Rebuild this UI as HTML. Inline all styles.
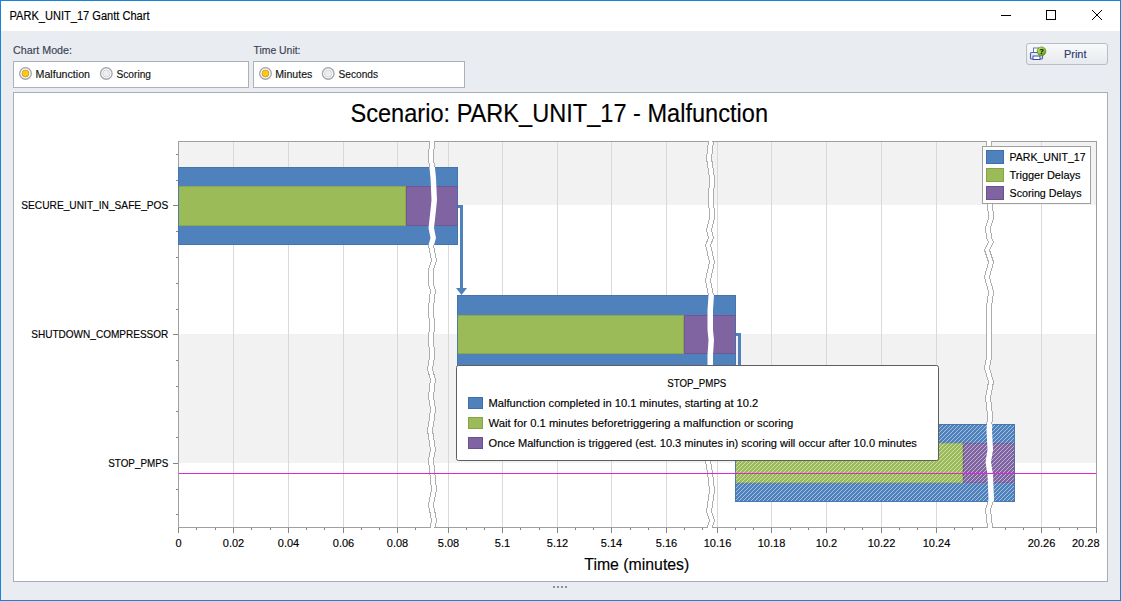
<!DOCTYPE html><html><head><meta charset="utf-8"><title>PARK_UNIT_17 Gantt Chart</title>
<style>html,body{margin:0;padding:0;width:1121px;height:601px;overflow:hidden;background:#e9ecf0}svg{display:block;font-family:"Liberation Sans", sans-serif}text{stroke:currentColor;stroke-width:0.15px}</style></head><body>
<svg width="1121" height="601" viewBox="0 0 1121 601" shape-rendering="crispEdges">
<defs>
<pattern id="hatch" patternUnits="userSpaceOnUse" width="4" height="4"><path d="M-1,1 L1,-1 M0,4 L4,0 M3,5 L5,3" stroke="#ffffff" stroke-opacity="0.5" stroke-width="1" shape-rendering="auto"/></pattern>
<filter id="tipsh" x="-5%" y="-5%" width="110%" height="120%"><feDropShadow dx="1" dy="1" stdDeviation="1" flood-color="#000" flood-opacity="0.15"/></filter>
</defs>
<rect x="0" y="0" width="1121" height="601" fill="#e9ecf0"/>
<rect x="1" y="1" width="1119" height="30" fill="#ffffff"/>
<rect x="0.5" y="0.5" width="1120" height="600" fill="none" stroke="#1883d7"/>
<text x="9.5" y="20" font-size="12" fill="#000" color="#000" text-anchor="start" textLength="140" lengthAdjust="spacingAndGlyphs">PARK_UNIT_17 Gantt Chart</text>
<rect x="1001" y="15" width="10" height="1" fill="#000"/>
<rect x="1046.5" y="10.5" width="9" height="9" fill="none" stroke="#000"/>
<path d="M1092,10 L1102,20 M1102,10 L1092,20" stroke="#000" stroke-width="1" shape-rendering="auto"/>
<text x="13" y="54" font-size="11" fill="#3a4152" color="#3a4152" text-anchor="start" textLength="59" lengthAdjust="spacingAndGlyphs">Chart Mode:</text>
<text x="253.5" y="54" font-size="11" fill="#3a4152" color="#3a4152" text-anchor="start" textLength="47" lengthAdjust="spacingAndGlyphs">Time Unit:</text>
<rect x="13.5" y="61.5" width="235" height="26" fill="#fff" stroke="#acb0b8"/>
<rect x="253.5" y="61.5" width="211" height="26" fill="#fff" stroke="#acb0b8"/>
<g shape-rendering="auto"><circle cx="25.5" cy="73.5" r="5.8" fill="#fff" stroke="#a4a8b0" stroke-width="1.4"/><circle cx="25.5" cy="73.5" r="3.4" fill="#f7cf10" stroke="#e09a20" stroke-width="1"/></g>
<text x="35.5" y="78" font-size="11" fill="#111" color="#111" text-anchor="start" textLength="54.5" lengthAdjust="spacingAndGlyphs">Malfunction</text>
<g shape-rendering="auto"><circle cx="106.3" cy="73.5" r="5.8" fill="#fff" stroke="#a4a8b0" stroke-width="1.4"/><circle cx="106.3" cy="73.5" r="3.6" fill="#eeeeee" stroke="#d4d6da" stroke-width="1"/></g>
<text x="116.5" y="78" font-size="11" fill="#111" color="#111" text-anchor="start" textLength="34.5" lengthAdjust="spacingAndGlyphs">Scoring</text>
<g shape-rendering="auto"><circle cx="265.5" cy="73.5" r="5.8" fill="#fff" stroke="#a4a8b0" stroke-width="1.4"/><circle cx="265.5" cy="73.5" r="3.4" fill="#f7cf10" stroke="#e09a20" stroke-width="1"/></g>
<text x="275.3" y="78" font-size="11" fill="#111" color="#111" text-anchor="start" textLength="37" lengthAdjust="spacingAndGlyphs">Minutes</text>
<g shape-rendering="auto"><circle cx="328.2" cy="73.5" r="5.8" fill="#fff" stroke="#a4a8b0" stroke-width="1.4"/><circle cx="328.2" cy="73.5" r="3.6" fill="#eeeeee" stroke="#d4d6da" stroke-width="1"/></g>
<text x="338.5" y="78" font-size="11" fill="#111" color="#111" text-anchor="start" textLength="39.5" lengthAdjust="spacingAndGlyphs">Seconds</text>
<defs><linearGradient id="btng" x1="0" y1="0" x2="0" y2="1"><stop offset="0" stop-color="#f9fafb"/><stop offset="1" stop-color="#e6e9ed"/></linearGradient></defs>
<rect x="1026.5" y="43.5" width="81" height="21" rx="2.5" fill="url(#btng)" stroke="#b9bdc4" shape-rendering="auto"/>
<text x="1064" y="58" font-size="11" fill="#2c3a70" color="#2c3a70" text-anchor="start" textLength="22.5" lengthAdjust="spacingAndGlyphs">Print</text>
<g shape-rendering="auto"><rect x="1033.5" y="48" width="5" height="6" fill="#fff" stroke="#6a74c0" stroke-width="1"/><rect x="1030.5" y="52.5" width="12" height="6.5" rx="1" fill="#e8ecf8" stroke="#5560b0" stroke-width="1.2"/><rect x="1033" y="56" width="7" height="3.5" fill="#fff" stroke="#3a48a0" stroke-width="1"/><defs><radialGradient id="qg" cx="0.4" cy="0.35" r="0.7"><stop offset="0" stop-color="#c8ec6a"/><stop offset="0.6" stop-color="#8cc43a"/><stop offset="1" stop-color="#4d8a12"/></radialGradient></defs><circle cx="1041.5" cy="51.3" r="4.4" fill="url(#qg)" stroke="#4f8a10" stroke-width="0.6"/><text x="1041.5" y="54.3" font-size="7.5" font-weight="bold" fill="#000" text-anchor="middle">?</text></g>
<rect x="13.5" y="92.5" width="1094" height="489" fill="#fff" stroke="#a9adb5"/>
<rect x="553" y="586" width="2" height="2" fill="#8a8f98"/>
<rect x="557" y="586" width="2" height="2" fill="#8a8f98"/>
<rect x="561" y="586" width="2" height="2" fill="#8a8f98"/>
<rect x="565" y="586" width="2" height="2" fill="#8a8f98"/>
<text x="350.5" y="121.5" font-size="25" fill="#000" color="#000" text-anchor="start" textLength="417.5" lengthAdjust="spacingAndGlyphs">Scenario: PARK_UNIT_17 - Malfunction</text>
<rect x="178" y="141" width="918" height="386" fill="#fff"/>
<rect x="179" y="142" width="917" height="63" fill="#f2f2f2"/>
<rect x="179" y="334" width="917" height="129" fill="#f2f2f2"/>
<rect x="233" y="142" width="1" height="385" fill="#d9d9d9"/>
<rect x="288" y="142" width="1" height="385" fill="#d9d9d9"/>
<rect x="343" y="142" width="1" height="385" fill="#d9d9d9"/>
<rect x="397" y="142" width="1" height="385" fill="#d9d9d9"/>
<rect x="448" y="142" width="1" height="385" fill="#d9d9d9"/>
<rect x="502" y="142" width="1" height="385" fill="#d9d9d9"/>
<rect x="557" y="142" width="1" height="385" fill="#d9d9d9"/>
<rect x="611" y="142" width="1" height="385" fill="#d9d9d9"/>
<rect x="666" y="142" width="1" height="385" fill="#d9d9d9"/>
<rect x="717" y="142" width="1" height="385" fill="#d9d9d9"/>
<rect x="771" y="142" width="1" height="385" fill="#d9d9d9"/>
<rect x="826" y="142" width="1" height="385" fill="#d9d9d9"/>
<rect x="881" y="142" width="1" height="385" fill="#d9d9d9"/>
<rect x="936" y="142" width="1" height="385" fill="#d9d9d9"/>
<rect x="1041" y="142" width="1" height="385" fill="#d9d9d9"/>
<polygon points="430.0,141 429.0,158 431.0,178 432.0,200 431.0,210 429.0,228 431.0,238 429.0,245 432.0,260 429.0,270 429.0,285 431.0,290 430.0,298 429.0,308 430.0,327 429.0,337 430.0,357 428.0,369 431.0,380 430.0,387 429.0,397 431.0,409 429.0,425 428.0,430 431.0,450 429.0,460 430.0,470 432.0,490 429.0,505 432.0,520 431.0,527 435.0,527 436.0,520 433.0,505 436.0,490 434.0,470 433.0,460 435.0,450 432.0,430 433.0,425 435.0,409 433.0,397 434.0,387 435.0,380 432.0,369 434.0,357 433.0,337 434.0,327 433.0,308 434.0,298 435.0,290 433.0,285 433.0,270 436.0,260 433.0,245 435.0,238 433.0,228 435.0,210 436.0,200 435.0,178 433.0,158 434.0,141" fill="#fff"/><path d="M429.5,141 L428.5,158 L430.5,178 L431.5,200 L430.5,210 L428.5,228 L430.5,238 L428.5,245 L431.5,260 L428.5,270 L428.5,285 L430.5,290 L429.5,298 L428.5,308 L429.5,327 L428.5,337 L429.5,357 L427.5,369 L430.5,380 L429.5,387 L428.5,397 L430.5,409 L428.5,425 L427.5,430 L430.5,450 L428.5,460 L429.5,470 L431.5,490 L428.5,505 L431.5,520 L430.5,527" fill="none" stroke="#adadad" stroke-width="1"/><path d="M434.5,141 L433.5,158 L435.5,178 L436.5,200 L435.5,210 L433.5,228 L435.5,238 L433.5,245 L436.5,260 L433.5,270 L433.5,285 L435.5,290 L434.5,298 L433.5,308 L434.5,327 L433.5,337 L434.5,357 L432.5,369 L435.5,380 L434.5,387 L433.5,397 L435.5,409 L433.5,425 L432.5,430 L435.5,450 L433.5,460 L434.5,470 L436.5,490 L433.5,505 L436.5,520 L435.5,527" fill="none" stroke="#adadad" stroke-width="1"/>
<polygon points="709.0,141 707.0,158 710.0,178 709.0,198 710.0,218 707.0,230 709.0,238 706.0,245 710.0,262 706.0,280 709.0,295 708.0,310 708.0,330 709.0,340 708.0,355 708.0,365 709.0,380 708.0,420 706.0,461 708.0,473 710.0,490 708.0,505 707.0,512 710.0,520 708.0,527 712.0,527 714.0,520 711.0,512 712.0,505 714.0,490 712.0,473 710.0,461 712.0,420 713.0,380 712.0,365 712.0,355 713.0,340 712.0,330 712.0,310 713.0,295 710.0,280 714.0,262 710.0,245 713.0,238 711.0,230 714.0,218 713.0,198 714.0,178 711.0,158 713.0,141" fill="#fff"/><path d="M708.5,141 L706.5,158 L709.5,178 L708.5,198 L709.5,218 L706.5,230 L708.5,238 L705.5,245 L709.5,262 L705.5,280 L708.5,295 L707.5,310 L707.5,330 L708.5,340 L707.5,355 L707.5,365 L708.5,380 L707.5,420 L705.5,461 L707.5,473 L709.5,490 L707.5,505 L706.5,512 L709.5,520 L707.5,527" fill="none" stroke="#adadad" stroke-width="1"/><path d="M713.5,141 L711.5,158 L714.5,178 L713.5,198 L714.5,218 L711.5,230 L713.5,238 L710.5,245 L714.5,262 L710.5,280 L713.5,295 L712.5,310 L712.5,330 L713.5,340 L712.5,355 L712.5,365 L713.5,380 L712.5,420 L710.5,461 L712.5,473 L714.5,490 L712.5,505 L711.5,512 L714.5,520 L712.5,527" fill="none" stroke="#adadad" stroke-width="1"/>
<polygon points="987.0,141 988.0,204 989.0,218 986.0,228 987.0,238 989.0,242 985.0,250 989.0,262 985.0,277 989.0,292 987.0,307 987.0,335 987.0,357 985.0,368 989.0,382 986.0,398 988.0,415 987.0,430 988.0,450 986.0,462 988.0,475 989.0,500 986.0,510 988.0,527 992.0,527 990.0,510 993.0,500 992.0,475 990.0,462 992.0,450 991.0,430 992.0,415 990.0,398 993.0,382 989.0,368 991.0,357 991.0,335 991.0,307 993.0,292 989.0,277 993.0,262 989.0,250 993.0,242 991.0,238 990.0,228 993.0,218 992.0,204 991.0,141" fill="#fff"/><path d="M986.5,141 L987.5,204 L988.5,218 L985.5,228 L986.5,238 L988.5,242 L984.5,250 L988.5,262 L984.5,277 L988.5,292 L986.5,307 L986.5,335 L986.5,357 L984.5,368 L988.5,382 L985.5,398 L987.5,415 L986.5,430 L987.5,450 L985.5,462 L987.5,475 L988.5,500 L985.5,510 L987.5,527" fill="none" stroke="#adadad" stroke-width="1"/><path d="M991.5,141 L992.5,204 L993.5,218 L990.5,228 L991.5,238 L993.5,242 L989.5,250 L993.5,262 L989.5,277 L993.5,292 L991.5,307 L991.5,335 L991.5,357 L989.5,368 L993.5,382 L990.5,398 L992.5,415 L991.5,430 L992.5,450 L990.5,462 L992.5,475 L993.5,500 L990.5,510 L992.5,527" fill="none" stroke="#adadad" stroke-width="1"/>
<rect x="178" y="141" width="918" height="1" fill="#a0a0a0"/>
<rect x="1096" y="141" width="1" height="387" fill="#a0a0a0"/>
<rect x="178" y="141" width="1" height="387" fill="#a0a0a0"/>
<rect x="178" y="527" width="919" height="1" fill="#a0a0a0"/>
<rect x="176" y="154" width="2" height="1" fill="#858585"/>
<rect x="176" y="180" width="2" height="1" fill="#858585"/>
<rect x="173" y="205" width="5" height="1" fill="#858585"/>
<rect x="176" y="231" width="2" height="1" fill="#858585"/>
<rect x="176" y="257" width="2" height="1" fill="#858585"/>
<rect x="176" y="283" width="2" height="1" fill="#858585"/>
<rect x="176" y="309" width="2" height="1" fill="#858585"/>
<rect x="173" y="334" width="5" height="1" fill="#858585"/>
<rect x="176" y="360" width="2" height="1" fill="#858585"/>
<rect x="176" y="386" width="2" height="1" fill="#858585"/>
<rect x="176" y="411" width="2" height="1" fill="#858585"/>
<rect x="176" y="437" width="2" height="1" fill="#858585"/>
<rect x="173" y="463" width="5" height="1" fill="#858585"/>
<rect x="176" y="489" width="2" height="1" fill="#858585"/>
<rect x="176" y="514" width="2" height="1" fill="#858585"/>
<rect x="178" y="528" width="1" height="5" fill="#858585"/>
<rect x="233" y="528" width="1" height="5" fill="#858585"/>
<rect x="288" y="528" width="1" height="5" fill="#858585"/>
<rect x="343" y="528" width="1" height="5" fill="#858585"/>
<rect x="397" y="528" width="1" height="5" fill="#858585"/>
<rect x="448" y="528" width="1" height="5" fill="#858585"/>
<rect x="502" y="528" width="1" height="5" fill="#858585"/>
<rect x="557" y="528" width="1" height="5" fill="#858585"/>
<rect x="611" y="528" width="1" height="5" fill="#858585"/>
<rect x="666" y="528" width="1" height="5" fill="#858585"/>
<rect x="717" y="528" width="1" height="5" fill="#858585"/>
<rect x="771" y="528" width="1" height="5" fill="#858585"/>
<rect x="826" y="528" width="1" height="5" fill="#858585"/>
<rect x="881" y="528" width="1" height="5" fill="#858585"/>
<rect x="936" y="528" width="1" height="5" fill="#858585"/>
<rect x="1041" y="528" width="1" height="5" fill="#858585"/>
<rect x="1096" y="528" width="1" height="5" fill="#858585"/>
<rect x="196" y="528" width="1" height="2" fill="#858585"/>
<rect x="215" y="528" width="1" height="2" fill="#858585"/>
<rect x="251" y="528" width="1" height="2" fill="#858585"/>
<rect x="270" y="528" width="1" height="2" fill="#858585"/>
<rect x="306" y="528" width="1" height="2" fill="#858585"/>
<rect x="324" y="528" width="1" height="2" fill="#858585"/>
<rect x="361" y="528" width="1" height="2" fill="#858585"/>
<rect x="379" y="528" width="1" height="2" fill="#858585"/>
<rect x="415" y="528" width="1" height="2" fill="#858585"/>
<rect x="466" y="528" width="1" height="2" fill="#858585"/>
<rect x="484" y="528" width="1" height="2" fill="#858585"/>
<rect x="520" y="528" width="1" height="2" fill="#858585"/>
<rect x="539" y="528" width="1" height="2" fill="#858585"/>
<rect x="575" y="528" width="1" height="2" fill="#858585"/>
<rect x="593" y="528" width="1" height="2" fill="#858585"/>
<rect x="630" y="528" width="1" height="2" fill="#858585"/>
<rect x="648" y="528" width="1" height="2" fill="#858585"/>
<rect x="684" y="528" width="1" height="2" fill="#858585"/>
<rect x="702" y="528" width="1" height="2" fill="#858585"/>
<rect x="735" y="528" width="1" height="2" fill="#858585"/>
<rect x="753" y="528" width="1" height="2" fill="#858585"/>
<rect x="790" y="528" width="1" height="2" fill="#858585"/>
<rect x="808" y="528" width="1" height="2" fill="#858585"/>
<rect x="844" y="528" width="1" height="2" fill="#858585"/>
<rect x="862" y="528" width="1" height="2" fill="#858585"/>
<rect x="899" y="528" width="1" height="2" fill="#858585"/>
<rect x="917" y="528" width="1" height="2" fill="#858585"/>
<rect x="954" y="528" width="1" height="2" fill="#858585"/>
<rect x="972" y="528" width="1" height="2" fill="#858585"/>
<rect x="1005" y="528" width="1" height="2" fill="#858585"/>
<rect x="1023" y="528" width="1" height="2" fill="#858585"/>
<rect x="1059" y="528" width="1" height="2" fill="#858585"/>
<rect x="1077" y="528" width="1" height="2" fill="#858585"/>
<rect x="430.4" y="141" width="3.5" height="1" fill="#fff"/>
<rect x="430.7" y="527" width="3.5" height="1" fill="#fff"/>
<rect x="708.5" y="141" width="3.5" height="1" fill="#fff"/>
<rect x="708" y="527" width="3.5" height="1" fill="#fff"/>
<rect x="987.3" y="141" width="3.5" height="1" fill="#fff"/>
<rect x="988.3" y="527" width="3.5" height="1" fill="#fff"/>
<rect x="178" y="167" width="280" height="78" fill="#4f81bd"/><rect x="178" y="186" width="228" height="40" fill="#9bbb59"/><rect x="406" y="186" width="52" height="40" fill="#8064a2"/><rect x="178.5" y="186.5" width="227" height="39" fill="none" stroke="#86a54a" stroke-opacity="0.8"/><rect x="406.5" y="186.5" width="51" height="39" fill="none" stroke="#6c5290" stroke-opacity="0.8"/><rect x="178.5" y="167.5" width="279" height="77" fill="none" stroke="#4371ae" stroke-opacity="0.8"/>
<rect x="457" y="295" width="279" height="78" fill="#4f81bd"/><rect x="457" y="315" width="227" height="39" fill="#9bbb59"/><rect x="684" y="315" width="52" height="39" fill="#8064a2"/><rect x="457.5" y="315.5" width="226" height="38" fill="none" stroke="#86a54a" stroke-opacity="0.8"/><rect x="684.5" y="315.5" width="51" height="38" fill="none" stroke="#6c5290" stroke-opacity="0.8"/><rect x="457.5" y="295.5" width="278" height="77" fill="none" stroke="#4371ae" stroke-opacity="0.8"/>
<rect x="735" y="424" width="280" height="78" fill="#4f81bd"/><rect x="735" y="443" width="228" height="40" fill="#9bbb59"/><rect x="963" y="443" width="52" height="40" fill="#8064a2"/><rect x="735.5" y="443.5" width="227" height="39" fill="none" stroke="#86a54a" stroke-opacity="0.8"/><rect x="963.5" y="443.5" width="51" height="39" fill="none" stroke="#6c5290" stroke-opacity="0.8"/><rect x="735" y="424" width="280" height="78" fill="url(#hatch)"/><rect x="735.5" y="424.5" width="279" height="77" fill="none" stroke="#4371ae" stroke-opacity="0.8"/>
<clipPath id="barclip"><rect x="178" y="167" width="280" height="78"/><rect x="457" y="295" width="279" height="78"/><rect x="735" y="424" width="280" height="78"/></clipPath>
<polygon points="429.5,141 428.5,158 430.5,178 431.5,200 430.5,210 428.5,228 430.5,238 428.5,245 431.5,260 428.5,270 428.5,285 430.5,290 429.5,298 428.5,308 429.5,327 428.5,337 429.5,357 427.5,369 430.5,380 429.5,387 428.5,397 430.5,409 428.5,425 427.5,430 430.5,450 428.5,460 429.5,470 431.5,490 428.5,505 431.5,520 430.5,527 436.0,527 437.0,520 434.0,505 437.0,490 435.0,470 434.0,460 436.0,450 433.0,430 434.0,425 436.0,409 434.0,397 435.0,387 436.0,380 433.0,369 435.0,357 434.0,337 435.0,327 434.0,308 435.0,298 436.0,290 434.0,285 434.0,270 437.0,260 434.0,245 436.0,238 434.0,228 436.0,210 437.0,200 436.0,178 434.0,158 435.0,141" fill="#fff" clip-path="url(#barclip)" shape-rendering="auto"/>
<polygon points="708.5,141 706.5,158 709.5,178 708.5,198 709.5,218 706.5,230 708.5,238 705.5,245 709.5,262 705.5,280 708.5,295 707.5,310 707.5,330 708.5,340 707.5,355 707.5,365 708.5,380 707.5,420 705.5,461 707.5,473 709.5,490 707.5,505 706.5,512 709.5,520 707.5,527 713.0,527 715.0,520 712.0,512 713.0,505 715.0,490 713.0,473 711.0,461 713.0,420 714.0,380 713.0,365 713.0,355 714.0,340 713.0,330 713.0,310 714.0,295 711.0,280 715.0,262 711.0,245 714.0,238 712.0,230 715.0,218 714.0,198 715.0,178 712.0,158 714.0,141" fill="#fff" clip-path="url(#barclip)" shape-rendering="auto"/>
<polygon points="986.5,141 987.5,204 988.5,218 985.5,228 986.5,238 988.5,242 984.5,250 988.5,262 984.5,277 988.5,292 986.5,307 986.5,335 986.5,357 984.5,368 988.5,382 985.5,398 987.5,415 986.5,430 987.5,450 985.5,462 987.5,475 988.5,500 985.5,510 987.5,527 993.0,527 991.0,510 994.0,500 993.0,475 991.0,462 993.0,450 992.0,430 993.0,415 991.0,398 994.0,382 990.0,368 992.0,357 992.0,335 992.0,307 994.0,292 990.0,277 994.0,262 990.0,250 994.0,242 992.0,238 991.0,228 994.0,218 993.0,204 992.0,141" fill="#fff" clip-path="url(#barclip)" shape-rendering="auto"/>
<rect x="458" y="205" width="5" height="3" fill="#4f81bd"/>
<rect x="460" y="205" width="3" height="84" fill="#4f81bd"/>
<path d="M456,288 L467,288 L461.5,295 Z" fill="#4f81bd" shape-rendering="auto"/>
<rect x="736" y="333" width="5" height="3" fill="#4f81bd"/>
<rect x="738" y="333" width="3" height="85" fill="#4f81bd"/>
<rect x="179" y="473" width="917" height="1" fill="#e024d6"/>
<rect x="982.5" y="146.5" width="108" height="57" fill="#fff" stroke="#a0a0a0"/>
<rect x="986.5" y="150.5" width="17" height="13" fill="#4f81bd" stroke="#3d6fa8"/>
<text x="1009.5" y="161" font-size="11" fill="#000" color="#000" text-anchor="start" textLength="76" lengthAdjust="spacingAndGlyphs">PARK_UNIT_17</text>
<rect x="986.5" y="168.5" width="17" height="13" fill="#9bbb59" stroke="#86a444"/>
<text x="1009.5" y="179" font-size="11" fill="#000" color="#000" text-anchor="start" textLength="71" lengthAdjust="spacingAndGlyphs">Trigger Delays</text>
<rect x="986.5" y="186.5" width="17" height="13" fill="#8064a2" stroke="#6a5090"/>
<text x="1009.5" y="197" font-size="11" fill="#000" color="#000" text-anchor="start" textLength="72" lengthAdjust="spacingAndGlyphs">Scoring Delays</text>
<text x="168.3" y="209" font-size="11" fill="#000" color="#000" text-anchor="end" textLength="147" lengthAdjust="spacingAndGlyphs">SECURE_UNIT_IN_SAFE_POS</text>
<text x="168.3" y="338" font-size="11" fill="#000" color="#000" text-anchor="end" textLength="137" lengthAdjust="spacingAndGlyphs">SHUTDOWN_COMPRESSOR</text>
<text x="168.3" y="467" font-size="11" fill="#000" color="#000" text-anchor="end" textLength="60" lengthAdjust="spacingAndGlyphs">STOP_PMPS</text>
<text x="178.5" y="547" font-size="11" fill="#000" color="#000" text-anchor="middle">0</text>
<text x="233.5" y="547" font-size="11" fill="#000" color="#000" text-anchor="middle">0.02</text>
<text x="288.5" y="547" font-size="11" fill="#000" color="#000" text-anchor="middle">0.04</text>
<text x="343.5" y="547" font-size="11" fill="#000" color="#000" text-anchor="middle">0.06</text>
<text x="397.5" y="547" font-size="11" fill="#000" color="#000" text-anchor="middle">0.08</text>
<text x="448.5" y="547" font-size="11" fill="#000" color="#000" text-anchor="middle">5.08</text>
<text x="502.5" y="547" font-size="11" fill="#000" color="#000" text-anchor="middle">5.1</text>
<text x="557.5" y="547" font-size="11" fill="#000" color="#000" text-anchor="middle">5.12</text>
<text x="611.5" y="547" font-size="11" fill="#000" color="#000" text-anchor="middle">5.14</text>
<text x="666.5" y="547" font-size="11" fill="#000" color="#000" text-anchor="middle">5.16</text>
<text x="717.5" y="547" font-size="11" fill="#000" color="#000" text-anchor="middle">10.16</text>
<text x="771.5" y="547" font-size="11" fill="#000" color="#000" text-anchor="middle">10.18</text>
<text x="826.5" y="547" font-size="11" fill="#000" color="#000" text-anchor="middle">10.2</text>
<text x="881.5" y="547" font-size="11" fill="#000" color="#000" text-anchor="middle">10.22</text>
<text x="936.5" y="547" font-size="11" fill="#000" color="#000" text-anchor="middle">10.24</text>
<text x="1041.5" y="547" font-size="11" fill="#000" color="#000" text-anchor="middle">20.26</text>
<text x="1099.5" y="547" font-size="11" fill="#000" color="#000" text-anchor="end">20.28</text>
<text x="584.3" y="570" font-size="16" fill="#000" color="#000" text-anchor="start" textLength="105" lengthAdjust="spacingAndGlyphs">Time (minutes)</text>
<rect x="456.5" y="365.5" width="482" height="95" rx="2" fill="#fff" stroke="#5e5e5e" shape-rendering="auto"/>
<text x="667.3" y="387" font-size="11" fill="#000" color="#000" text-anchor="start" textLength="59" lengthAdjust="spacingAndGlyphs">STOP_PMPS</text>
<rect x="468.5" y="397.5" width="14" height="11" fill="#4f81bd" stroke="#3d6fa8"/>
<text x="488.6" y="407" font-size="11" fill="#000" color="#000" text-anchor="start" textLength="269.7" lengthAdjust="spacingAndGlyphs">Malfunction completed in 10.1 minutes, starting at 10.2</text>
<rect x="468.5" y="417.5" width="14" height="11" fill="#9bbb59" stroke="#86a444"/>
<text x="488.6" y="427" font-size="11" fill="#000" color="#000" text-anchor="start" textLength="304.8" lengthAdjust="spacingAndGlyphs">Wait for 0.1 minutes beforetriggering a malfunction or scoring</text>
<rect x="468.5" y="437.5" width="14" height="11" fill="#8064a2" stroke="#6a5090"/>
<text x="488.6" y="447" font-size="11" fill="#000" color="#000" text-anchor="start" textLength="428.2" lengthAdjust="spacingAndGlyphs">Once Malfunction is triggered (est. 10.3 minutes in) scoring will occur after 10.0 minutes</text>
</svg></body></html>
